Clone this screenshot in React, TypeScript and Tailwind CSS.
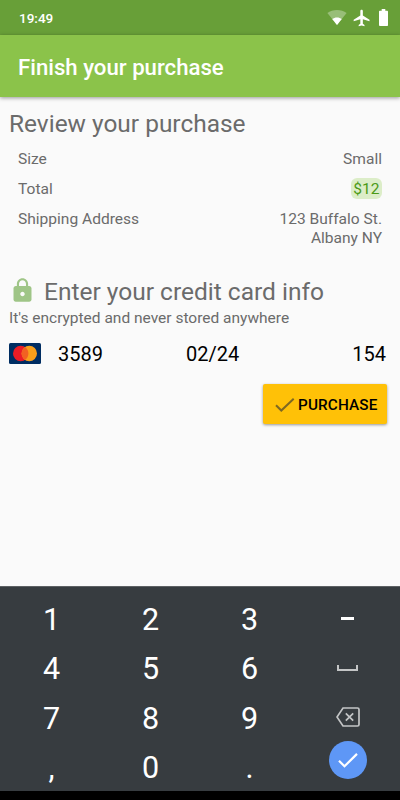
import React from 'react';

const row = 'flex h-[30px] items-start justify-between';
const keyCell = 'flex items-center justify-center';

function Wifi() {
  return (
    <svg className="h-[17px] w-[20px]" viewBox="0 0 20 17">
      <path d="M10 16 .4 4.100C3 2 6.300.9 10 .9s7 1.100 9.600 3.200z" fill="#fff" fillOpacity=".32" />
      <path d="M10 16 5.200 10.100C6.500 9 8.200 8.500 10 8.500s3.500.5 4.800 1.600z" fill="#fff" />
    </svg>
  );
}

function Lock() {
  return (
    <svg className="h-[27px] w-[27px]" viewBox="0 0 24 24" fill="#9fc587">
      <path d="M18 8h-1V6c0-2.760-2.240-5-5-5S7 3.240 7 6v2H6c-1.100 0-2 .9-2 2v10c0 1.100.9 2 2 2h12c1.100 0 2-.9 2-2V10c0-1.100-.9-2-2-2zm-6 9c-1.100 0-2-.9-2-2s.9-2 2-2 2 .9 2 2-.9 2-2 2zm3.100-9H8.900V6c0-1.710 1.390-3.100 3.100-3.100 1.710 0 3.100 1.390 3.100 3.100v2z" />
    </svg>
  );
}

function Mastercard() {
  return (
    <svg className="-mt-[2px] h-[21px] w-[32px]" viewBox="0 0 32 21">
      <rect width="32" height="21" rx="1.500" fill="#002d62" />
      <circle cx="11.700" cy="10.500" r="7.700" fill="#eb1c26" />
      <circle cx="20.300" cy="10.500" r="7.700" fill="#f99f1b" />
      <path d="M16 4.100a7.700 7.700 0 0 1 0 12.800a7.700 7.700 0 0 1 0-12.800z" fill="#f26122" />
    </svg>
  );
}

export default function App() {
  return (
    <div className="flex h-[800px] w-[400px] flex-col overflow-hidden bg-[#fafafa] font-['Roboto',sans-serif] text-[#6b6b6b]">
      <div className="flex h-[35px] shrink-0 items-center bg-[#689f38] pl-[19px] pr-[12px] text-white">
        <span className="mr-auto pt-[1px] text-[13.500px] font-medium leading-[18px]">19:49</span>
        <Wifi />
        <svg className="ml-[5px] h-[20px] w-[20px]" viewBox="0 0 24 24" fill="#fff">
          <path d="M21 16v-2l-8-5V3.500c0-.83-.67-1.500-1.500-1.500S10 2.670 10 3.500V9l-8 5v2l8-2.500V19l-2 1.500V22l3.500-1 3.500 1v-1.500L13 19v-5.500z" />
        </svg>
        <svg className="ml-[7px] h-[17px] w-[9px]" viewBox="0 0 10 17" preserveAspectRatio="none" fill="#fff">
          <path d="M3 0h4v1.700h1.900c.6 0 1.100.4 1.100 1V16c0 .6-.4 1-1 1H1c-.6 0-1-.4-1-1V2.700c0-.6.500-1 1.100-1H3z" />
        </svg>
      </div>
      <header className="flex h-[62px] shrink-0 items-center bg-[#8bc34a] pl-[18px] pt-[2px] shadow-[0_1px_4px_rgba(0,0,0,0.4)]">
        <h1 className="text-[22.200px] font-medium leading-[26px] text-white">Finish your purchase</h1>
      </header>

      <main className="flex flex-1 flex-col pt-[12px]">
        <h2 className="pl-[9px] text-[24.440px] leading-[30px]">Review your purchase</h2>
        <dl className="mt-[11px] pl-[18px] pr-[18px] text-[15.550px] leading-[18px]">
          <div className={row}>
            <dt>Size</dt>
            <dd>Small</dd>
          </div>
          <div className={row}>
            <dt>Total</dt>
            <dd className="-mt-[2px] h-[21px] rounded-[6px] bg-[#dcedc8] px-[2.500px] pt-[2px] text-[#4c9a18]">$12</dd>
          </div>
          <div className="flex h-[37px] justify-between">
            <dt>Shipping Address</dt>
            <dd className="text-right">
              <span className="block">123 Buffalo St.</span>
              <span className="block pt-[1px]">Albany NY</span>
            </dd>
          </div>
        </dl>

        <div className="mt-[30px] flex h-[32px] items-start pl-[9px]">
          <Lock />
          <h2 className="ml-[8px] text-[24.500px] leading-[30px]">Enter your credit card info</h2>
        </div>
        <p className="pl-[9px] text-[15.500px] leading-[18px]">It's encrypted and never stored anywhere</p>
        <div className="mt-[16px] grid h-[22px] grid-cols-[49px_128px_1fr_auto] items-center pl-[9px] pr-[14px] text-[20px] leading-[22px] text-black">
          <Mastercard />
          <span>3589</span>
          <span>02/24</span>
          <span>154</span>
        </div>
        <button className="ml-auto mr-[13px] mt-[19px] flex h-[40px] w-[124px] items-center rounded-[2px] bg-[#ffc107] pl-[12px] text-[15.270px] font-medium tracking-[0.150px] text-black shadow-[0_1px_3px_rgba(0,0,0,0.4)]">
          <svg className="mr-[3px] mt-[1px] h-[14px] w-[20px]" viewBox="0 0 20 14" fill="none" stroke="#7d6823" strokeWidth="2">
            <path d="M1 7.200 6.300 12.500 18.700.8" />
          </svg>
          <span className="pt-[2px]">PURCHASE</span>
        </button>
      </main>

      <div className="grid h-[205px] shrink-0 grid-cols-[99px_99px_99px_99px] grid-rows-[49.500px_49.500px_49.500px_49.500px] border-t border-[#5d6164] bg-[#373c40] pl-[2px] pt-[8px] text-[30.500px] leading-[36px] text-white">
        <span className={keyCell}>1</span>
        <span className={keyCell}>2</span>
        <span className={keyCell}>3</span>
        <span className={keyCell}><i className="-mt-[2px] mr-[2px] h-[3px] w-[13px] bg-white" /></span>
        <span className={keyCell}>4</span>
        <span className={keyCell}>5</span>
        <span className={keyCell}>6</span>
        <span className={keyCell}><i className="-mt-[3px] mr-[2px] h-[6px] w-[21px] border-2 border-t-0 border-[#c3c5c6]" /></span>
        <span className={keyCell}>7</span>
        <span className={keyCell}>8</span>
        <span className={keyCell}>9</span>
        <span className={keyCell}>
          <svg className="-mt-[4px] mr-[1px] h-[20px] w-[24px]" viewBox="0 0 24 20" fill="none" stroke="#c3c5c6" strokeWidth="1.700">
            <path d="M7 1h14.500c.8 0 1.500.7 1.500 1.500v15c0 .8-.7 1.500-1.500 1.500H7L1 10zM9.800 6.300l7.400 7.400M17.200 6.300l-7.400 7.400" />
          </svg>
        </span>
        <span className={keyCell}>,</span>
        <span className={keyCell}>0</span>
        <span className={keyCell}>.</span>
        <span className={keyCell}>
          <i className="-mt-[16px] mr-[1px] flex h-[38px] w-[38px] items-center justify-center rounded-full bg-[#5e97f6]">
            <svg className="h-[15px] w-[20px]" viewBox="0 0 20 15" fill="none" stroke="#fff" strokeWidth="2.200">
              <path d="M1 7.800 6.500 13.300 19 .9" />
            </svg>
          </i>
        </span>
      </div>
      <div className="h-[9px] shrink-0 bg-black" />
    </div>
  );
}
